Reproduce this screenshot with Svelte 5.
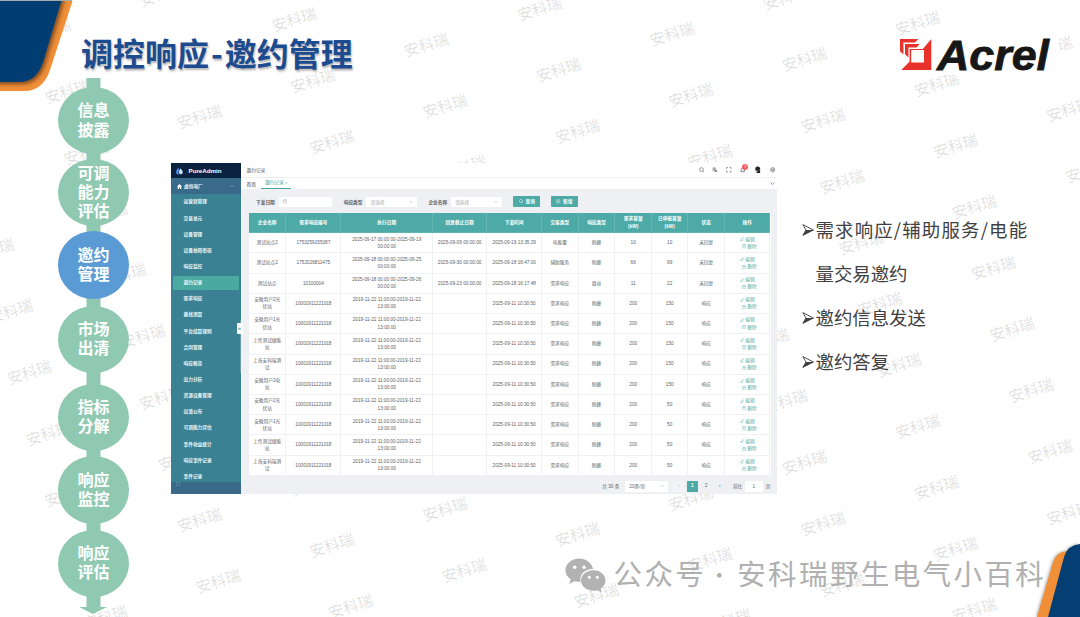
<script lang="ts">
	const stages = [
		{ label: '信息\n披露', gap: 9 },
		{ label: '可调\n能力\n评估', gap: 4.7 },
		{ label: '邀约\n管理', gap: 4.9, active: true },
		{ label: '市场\n出清', gap: 7 },
		{ label: '指标\n分解', gap: 10.6 },
		{ label: '响应\n监控', gap: 5.2 },
		{ label: '响应\n评估', gap: 6 }
	];

	const menu = [
		'运营商管理', '交易单元', '设备管理', '设备故障审核', '响应监控', '邀约记录',
		'需求响应', '基线测算', '平台结算规则', '合同管理', '响应概览', '出力分析',
		'资源设备管理', '出清公布', '可调能力评估', '事件收益统计', '响应事件记录', '事件记录'
	];

	const columns = [
		'企业名称', '需求响应编号', '执行日期', '回复截止日期', '下发时间', '交易类型',
		'响应类型', '需求容量\n(kW)', '已申报容量\n(kW)', '状态', '操作'
	];

	const history = (name: string, amount: number) => [
		name, '10001911221018', '2019-11-22 11:00:00-2019-11-22\n13:00:00', '',
		'2025-09-11 10:30:50', '需求响应', '削峰', 200, amount, '响应'
	];

	const rows = [
		['测试站点2', '1753259155087', '2025-09-17 00:00:00-2025-09-19\n00:00:00', '2025-09-09 00:00:00', '2025-09-19 13:35:29', '电能量', '削峰', 10, 10, '未回复'],
		['测试站点2', '1752026811475', '2025-09-18 00:00:00-2025-09-25\n00:00:00', '2025-09-30 00:00:00', '2025-09-18 16:47:00', '辅助服务', '削峰', 66, 99, '未回复'],
		['测试站点', '10100004', '2025-09-18 00:00:00-2025-09-26\n00:00:00', '2025-09-23 00:00:00', '2025-09-18 16:17:48', '需求响应', '填谷', 11, 22, '未回复'],
		history('安徽用户2光\n伏站', 150),
		history('安徽用户1光\n伏站', 150),
		history('上传测试储能\n站', 150),
		history('上海安科瑞测\n试', 150),
		history('安徽用户2电\n站', 150),
		history('安徽用户2光\n伏站', 50),
		history('安徽用户1光\n伏站', 50),
		history('上传测试储能\n站', 50),
		history('上海安科瑞测\n试', 50)
	];

	const notes = [
		['需求响应/辅助服务/电能', '量交易邀约'],
		['邀约信息发送'],
		['邀约答复']
	];

	// skewed lattice of repeated brand marks
	const marks: { x: number; y: number }[] = [];
	for (let i = -5; i < 15; i++) {
		for (let j = -5; j < 11; j++) {
			const x = 199.5 + i * 18.9 + j * 113.4;
			const y = 117 + i * 61.2 - j * 36;
			if (x > -22 && x < 1102 && y > -14 && y < 631) marks.push({ x, y });
		}
	}
</script>

<div class="slide">
	<svg class="marks" viewBox="0 0 1080 617">
		{#each marks as m}
			<text x={m.x} y={m.y + 5.5} text-anchor="middle" transform="rotate(-17.5 {m.x} {m.y})">安科瑞</text>
		{/each}
	</svg>

	<svg class="corner top-left" viewBox="0 0 74 94">
		<defs>
			<filter id="shade" x="-30%" y="-30%" width="160%" height="160%">
				<feDropShadow dx="2" dy="2" stdDeviation="2.2" flood-color="#000" flood-opacity="0.5" />
			</filter>
			<clipPath id="orange-tl"><path d="M0 1H72.5L50 70Q43 91 24 91H0Z" /></clipPath>
		</defs>
		<path d="M0 1H72.5L50 70Q43 91 24 91H0Z" fill="#f18f38" />
		<g clip-path="url(#orange-tl)">
			<path d="M-10 -8H64L43.5 61Q37 82 19 82H-10Z" fill="#043e73" filter="url(#shade)" />
		</g>
		<path d="M0 .5H72" stroke="#a9a9a9" />
	</svg>

	<header>
		<h1>调控响应<i>-</i>邀约管理</h1>
		<svg class="logo" viewBox="0 0 162 40" width="162" height="40">
			<g fill="#e8332c">
				<path d="M3 4H21.3L18 7.4H6.4V19.6L3 16.2Z" />
				<path d="M8 9H22.6L19.5 12.4H11.4V22.5L8 19.2Z" />
				<path d="M34.3 4V35H4.3L12.6 26.5V14H25.8ZM14.2 15V27.5H27V15Z" fill-rule="evenodd" />
			</g>
			<text x="40" y="35.3" textLength="112" lengthAdjust="spacingAndGlyphs">Acrel</text>
		</svg>
	</header>

	<main>
		<ol class="stages">
			{#each stages as stage}
				<li class:active={stage.active} style:margin-top="{stage.gap}px">{stage.label}</li>
			{/each}
		</ol>

		<section class="app">
			<aside>
				<div class="brand">
					<svg viewBox="0 0 10 10" width="9" height="10">
						<path d="M4 .8Q.4 5 1.4 7.4Q2.5 9.3 4.5 9.2Q2.6 7.5 4.8 4.3Q3.8 2.7 4 .8Z" fill="#4f8df0" />
						<path d="M6.2 2.2Q3.6 5.2 4.6 7.4Q5.4 9 7.3 8.5Q9.3 7.4 8.3 5.2Q7.6 3.7 6.2 2.2Z" fill="#cfe4ff" />
					</svg>
					<b>PureAdmin</b>
				</div>
				<div class="group">
					<svg viewBox="0 0 10 10" width="5" height="5"><path d="M5 0L0 5H1.5V10H4V7H6V10H8.5V5H10Z" fill="#fff" /></svg>
					<span>虚拟电厂</span>
					<svg viewBox="0 0 8 8" width="4" height="4"><path d="M1 6L4 3L7 6" stroke="#9fc0cc" fill="none" /></svg>
				</div>
				<ul>
					{#each menu as item}
						<li class:current={item === '邀约记录'}>{item}</li>
					{/each}
				</ul>
				<div class="aside-foot"><svg viewBox="0 0 8 8" width="4" height="4"><path d="M0 1H4M0 4H3M0 7H4M7 1V7H5" stroke="#5fa4b4" fill="none" /></svg></div>
				<i class="thumb"></i>
				<i class="collapse">«</i>
			</aside>

			<div class="page">
				<div class="navbar">
					<span>邀约记录</span>
					<div class="tools">
						<svg viewBox="0 0 12 12"><circle cx="5.5" cy="5.5" r="4" /><path d="M8.5 8.5L11 11" /></svg>
						<svg viewBox="0 0 12 12"><path d="M1 2.5H8M4.5 1V2.5M7 2.5Q5 7 1 8M2.5 4Q4 7 7 7.5M6 11L8.5 5.5L11 11M7 9.5H10" /></svg>
						<svg viewBox="0 0 12 12"><path d="M1 4V1H4M8 1H11V4M11 8V11H8M4 11H1V8" /></svg>
						<span class="bell">
							<svg viewBox="0 0 12 12"><path d="M1 9.5H11M2.5 9.5V5Q2.5 2 6 2Q9.5 2 9.5 5V9.5M5 11.2H7" /></svg>
							<em>7</em>
						</span>
						<svg class="avatar" viewBox="0 0 12 12"><circle cx="6" cy="6" r="5.5" fill="#e3e8ec" stroke="none" /><path d="M2 5Q2 0 7 1Q11 2 9 6L10 11H4L5 8Q2 8 2 5Z" fill="#222" stroke="none" /><path d="M3 6L6 7L5 9Z" fill="#8fb4c4" stroke="none" /></svg>
						<svg viewBox="0 0 12 12"><path d="M6 1L10.3 3.5V8.5L6 11L1.7 8.5V3.5Z" /><circle cx="6" cy="6" r="2" /></svg>
					</div>
				</div>
				<div class="tags">
					<span>首页</span>
					<span class="tag-on">邀约记录 <small>×</small></span>
					<svg viewBox="0 0 8 8" width="5" height="5"><path d="M1 2.5L4 5.5L7 2.5" stroke="#555" fill="none" /></svg>
				</div>

				<div class="filters">
					<b>下发日期</b>
					<div class="field date"><svg viewBox="0 0 10 10" width="4.5" height="4.5"><path d="M1 2H9V9H1ZM1 4.5H9M3 .5V2M7 .5V2" stroke="#a8abb2" fill="none" /></svg></div>
					<b>响应类型</b>
					<div class="field">请选择<svg viewBox="0 0 8 8" width="4" height="4"><path d="M1 2.5L4 5.5L7 2.5" stroke="#a8abb2" fill="none" /></svg></div>
					<b>企业名称</b>
					<div class="field">请选择<svg viewBox="0 0 8 8" width="4" height="4"><path d="M1 2.5L4 5.5L7 2.5" stroke="#a8abb2" fill="none" /></svg></div>
					<button><svg viewBox="0 0 10 10"><circle cx="4.5" cy="4.5" r="3.5" /><path d="M7 7L9.5 9.5" /></svg>查询</button>
					<button><svg viewBox="0 0 10 10"><circle cx="5" cy="5" r="4" /><path d="M3 5H7M5 3V7" /></svg>新增</button>
				</div>

				<div class="table">
					<div class="row head">
						{#each columns as col}<div>{col}</div>{/each}
					</div>
					{#each rows as row}
						<div class="row">
							{#each row as cell}<div>{cell}</div>{/each}
							<div class="ops">
								<span><svg viewBox="0 0 10 10"><path d="M2 6.5L7 1.2L8.8 3L3.8 8H2ZM1 9.5H9" /></svg>编辑</span>
								<span><svg viewBox="0 0 10 10"><path d="M.5 2.5H9.5M2 2.5V9.3H8V2.5M3.5 2V.7H6.5V2" /></svg>删除</span>
							</div>
						</div>
					{/each}
				</div>

				<div class="pager">
					<span class="total">共 30 条</span>
					<div class="size">20条/页<svg viewBox="0 0 8 8" width="4" height="4"><path d="M1 2.5L4 5.5L7 2.5" stroke="#a8abb2" fill="none" /></svg></div>
					<span class="num prev">‹</span>
					<span class="num on">1</span>
					<span class="num">2</span>
					<span class="num next">›</span>
					<span class="goto">前往</span>
					<div class="jump">1</div>
					<span>页</span>
				</div>
			</div>
		</section>

		<ul class="notes">
			{#each notes as note}
				<li>
					<svg viewBox="0 0 12 12" width="12" height="12"><path d="M.8 .6L11.5 6L.8 11.4L4 6Z" fill="none" stroke="#404040" stroke-width=".9" /><path d="M4 6H11.5L.8 11.4Z" fill="#404040" /></svg>
					<div>{#each note as line, i}<p class:wide={note.length > 1 && i === 0}>{line}</p>{/each}</div>
				</li>
			{/each}
		</ul>
	</main>

	<div class="account">
		<svg viewBox="0 0 41 35" width="41" height="35" fill="#b2b2b2">
			<path d="M14.3 .5C6.5 .5 .4 5.7 .4 12.2C.4 16 2.5 19.2 5.7 21.3L4.4 26L9.6 23.2Q12 24 15.7 23.8C13.8 17 20 11 28.1 11.1C26.8 5 21 .5 14.3 .5Z" />
			<path d="M28.5 12.3C21.7 12.3 16 16.8 16 22.5C16 28.3 21.7 32.8 28.5 32.8Q30.7 32.8 32.6 32.2L36.7 34.5L35.7 30.7C38.6 28.8 40.5 25.9 40.5 22.5C40.5 16.8 35.2 12.3 28.5 12.3Z" />
			<g fill="#fff"><circle cx="9.7" cy="9.2" r="1.8" /><circle cx="19" cy="9.2" r="1.8" /><circle cx="24.3" cy="19.3" r="1.5" /><circle cx="32.3" cy="19.3" r="1.5" /></g>
		</svg>
		<span>公众号</span>
		<span class="dot">·</span>
		<span>安科瑞野生电气小百科</span>
	</div>

	<svg class="corner bottom-right" viewBox="0 0 50 80">
		<path d="M7 80L22.5 27Q26 14 39 14H50V80Z" fill="#f18f38" />
		<path d="M18 80L34 20Q38 7 52 7V80Z" fill="#043e73" />
	</svg>
</div>

<style>
	:global(body) {
		margin: 0;
		background: #fff;
	}
	.slide {
		position: relative;
		width: 1080px;
		height: 617px;
		overflow: hidden;
		background: #fff;
		font-family: 'Liberation Sans', 'Noto Sans CJK SC', sans-serif;
	}
	ul, ol, h1, p {
		margin: 0;
		padding: 0;
		list-style: none;
	}
	i, em {
		font-style: normal;
	}
	.marks {
		position: absolute;
		inset: 0;
		font: 300 15.2px 'Noto Sans CJK SC', sans-serif;
		fill: #d9d9d9;
	}
	.corner {
		position: absolute;
	}
	.top-left {
		left: 0;
		top: 0;
		width: 74px;
		height: 94px;
	}
	.bottom-right {
		right: 0;
		bottom: 0;
		width: 50px;
		height: 80px;
		filter: drop-shadow(-1px 0 1.5px #0005);
	}
	header {
		position: relative;
		display: flex;
		justify-content: space-between;
		align-items: flex-start;
		height: 78px;
		box-sizing: border-box;
		padding: 35px 21px 0 81px;
	}
	h1 {
		height: 34px;
		background: #fff;
		font: 700 32px/35px 'Noto Sans CJK SC', sans-serif;
		color: #1c4b8f;
		text-shadow: 1px 2px 2px #8889;
	}
	h1 i {
		margin: 0 2px;
	}
	.logo {
		background: #fff;
	}
	.logo text {
		font: italic 700 43px 'Liberation Sans', sans-serif;
		fill: #171717;
		stroke: #171717;
		stroke-width: 0.8;
	}
	main {
		position: relative;
		display: flex;
		align-items: flex-start;
		padding-left: 58px;
	}
	.stages {
		position: relative;
		width: 71px;
		height: 536px;
		display: flex;
		flex-direction: column;
	}
	.stages::before {
		content: '';
		position: absolute;
		left: 21px;
		top: 0;
		width: 28px;
		height: 536px;
		background: #90c9b1;
		clip-path: polygon(7.5px 0, 21.5px 0, 21.5px 529px, 28px 529px, 14px 536px, 0 529px, 7.5px 529px);
	}
	.stages li {
		position: relative;
		flex: none;
		height: 67.4px;
		box-sizing: border-box;
		padding-bottom: 2px;
		border-radius: 50%;
		background: #90c9b1;
		color: #fff;
		display: flex;
		align-items: center;
		justify-content: center;
		text-align: center;
		white-space: pre-line;
		font: 700 16px/19.3px 'Noto Sans CJK SC', sans-serif;
	}
	.stages li.active {
		background: #5b9bd5;
	}
	.app {
		display: flex;
		width: 606.5px;
		height: 331px;
		margin: 85px 0 0 41.5px;
		background: #eef0f4;
		font-size: 4.7px;
		color: #606266;
	}
	aside {
		position: relative;
		width: 70.5px;
		display: flex;
		flex-direction: column;
		background: #3a8194;
		color: #e8f4f5;
		font-weight: 700;
	}
	.brand {
		flex: none;
		height: 15px;
		display: flex;
		align-items: center;
		gap: 5px;
		padding-left: 4px;
		background: #0b2140;
		font-size: 6.2px;
		color: #fff;
	}
	.group {
		flex: none;
		height: 16px;
		display: flex;
		align-items: center;
		gap: 2.5px;
		padding: 0 7px 0 6px;
		background: #3a6a8a;
	}
	.group svg:last-child {
		margin-left: auto;
	}
	aside ul {
		flex: 1;
		min-height: 0;
		overflow: hidden;
	}
	aside li {
		height: 14px;
		margin: 0 2.5px 2.15px;
		padding-left: 10.5px;
		line-height: 14px;
		border-radius: 1px;
	}
	aside li:first-child {
		margin-top: 1.4px;
	}
	aside li.current {
		background: #4aa9a0;
	}
	.aside-foot {
		flex: none;
		height: 12.5px;
		padding-left: 5px;
		background: #396a8a;
	}
	.thumb {
		position: absolute;
		right: 0;
		top: 157px;
		width: 1.5px;
		height: 53px;
		background: #6b9ca9;
	}
	.collapse {
		position: absolute;
		right: -1.5px;
		top: 160px;
		width: 6px;
		height: 11px;
		border-radius: 1px;
		background: #fff;
		color: #4aa9a0;
		font-size: 6px;
		line-height: 10px;
		text-align: center;
	}
	.page {
		flex: 1;
		display: flex;
		flex-direction: column;
	}
	.navbar {
		height: 15px;
		display: flex;
		align-items: center;
		justify-content: space-between;
		padding: 0 2px 0 5.5px;
		background: #fff;
		border-bottom: 0.6px solid #eee;
		box-sizing: border-box;
	}
	.tools {
		display: flex;
		align-items: center;
		gap: 8.3px;
	}
	.tools svg {
		display: block;
		width: 5.5px;
		height: 5.5px;
		fill: none;
		stroke: #444;
		stroke-width: 1.2;
	}
	.tools .avatar {
		width: 7.5px;
		height: 7.5px;
	}
	.bell {
		position: relative;
	}
	.bell em {
		position: absolute;
		left: 2.5px;
		top: -3.5px;
		width: 6px;
		height: 6px;
		border-radius: 50%;
		background: #ee5f5f;
		color: #fff;
		font-size: 4px;
		line-height: 6px;
		text-align: center;
	}
	.tags {
		height: 11px;
		display: flex;
		align-items: center;
		gap: 5px;
		padding: 0 2.5px 0 5.5px;
		background: #fff;
		color: #333;
	}
	.tag-on {
		padding: 0 4px;
		line-height: 10px;
		border-bottom: 1px solid #4aa9a0;
		color: #4aa9a0;
	}
	.tags svg {
		margin-left: auto;
	}
	.filters {
		height: 24px;
		display: flex;
		align-items: center;
		padding: 1px 0 0 15px;
		box-sizing: border-box;
	}
	.filters b {
		width: 22.8px;
	}
	.field {
		width: 50.5px;
		height: 10px;
		box-sizing: border-box;
		display: flex;
		align-items: center;
		justify-content: space-between;
		margin-right: 11.4px;
		padding: 0 4px;
		border-radius: 1px;
		background: #fff;
		color: #a8abb2;
	}
	.field.date {
		width: 53.5px;
	}
	button {
		width: 27.3px;
		height: 10.3px;
		margin-right: 10.3px;
		display: flex;
		align-items: center;
		justify-content: center;
		gap: 2.5px;
		padding: 0;
		border: 0;
		border-radius: 1px;
		background: #4daaa6;
		color: #fff;
		font: inherit;
		font-weight: 700;
	}
	button svg {
		width: 4.5px;
		height: 4.5px;
		fill: none;
		stroke: #fff;
	}
	.table {
		margin-left: 8px;
		width: 521.5px;
		background: #fff;
	}
	.row {
		display: grid;
		grid-template-columns: 37.3px 55.2px 91.5px 54.3px 54.7px 36.7px 36.8px 36.5px 36.5px 36.5px 45.5px;
		height: 20.22px;
	}
	.row > div {
		display: flex;
		align-items: center;
		justify-content: center;
		box-sizing: border-box;
		border-right: 0.6px solid #f0f1f4;
		border-bottom: 0.6px solid #f0f1f4;
		line-height: 7.3px;
		text-align: center;
		white-space: pre-line;
	}
	.row.head > div {
		background: #4daaa6;
		border-color: #5fb5b0;
		color: #fff;
		font-weight: 700;
	}
	.row > .ops {
		flex-direction: column;
		color: #4daaa6;
	}
	.ops span {
		display: flex;
		align-items: center;
		gap: 1.2px;
	}
	.ops span:last-child {
		margin-left: 4px;
	}
	.ops svg {
		width: 4.2px;
		height: 4.2px;
		fill: none;
		stroke: #4daaa6;
	}
	.pager {
		flex: 1;
		display: flex;
		align-items: center;
		justify-content: flex-end;
		padding: 3px 6.5px 0 0;
	}
	.size, .jump {
		height: 10.5px;
		box-sizing: border-box;
		display: flex;
		align-items: center;
		justify-content: space-between;
		border-radius: 1px;
		background: #fff;
	}
	.size {
		width: 42.5px;
		margin: 0 5.3px 0 6px;
		padding: 0 4px;
	}
	.num {
		width: 11px;
		margin-right: 2.7px;
		line-height: 10.5px;
		text-align: center;
	}
	.num.prev {
		background: #f3f4f7;
		color: #a8abb2;
	}
	.num.on {
		background: #4daaa6;
		color: #fff;
		font-weight: 700;
	}
	.goto {
		margin: 0 2.5px 0 5px;
	}
	.jump {
		width: 18px;
		margin-right: 3px;
		justify-content: center;
	}
	.notes {
		margin: 129.4px 0 0 24.5px;
		color: #404040;
		font: 400 18.4px/44px 'Noto Sans CJK SC', sans-serif;
	}
	.notes li {
		display: flex;
		gap: 2px;
	}
	.notes svg {
		margin-top: 17px;
	}
	.notes p {
		white-space: nowrap;
	}
	.notes p.wide {
		letter-spacing: 1.2px;
	}
	.account {
		position: absolute;
		left: 565px;
		top: 557px;
		display: flex;
		align-items: center;
		height: 36px;
		white-space: nowrap;
		font: 400 28.5px/36px 'Noto Sans CJK SC', sans-serif;
		letter-spacing: 2.4px;
		color: #b0b0b0;
	}
	.account svg {
		margin-right: 7.5px;
	}
	.account span {
		margin-top: -4px;
	}
	.account .dot {
		width: 26px;
		margin-right: 5px;
		text-align: center;
		font-size: 22px;
		letter-spacing: 0;
	}
</style>
